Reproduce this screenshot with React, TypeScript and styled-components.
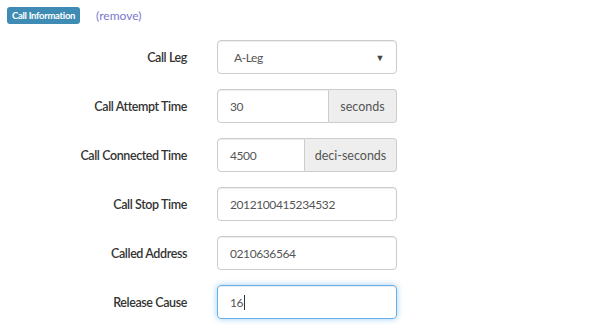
import React from "react";
import styled, { createGlobalStyle } from "styled-components";

const Global = createGlobalStyle`
  body { margin: 0; background: #fff; font-family: Lato, "Noto Sans", sans-serif; color: #333; }
`;

const Page = styled.div`
  padding: 6px 7px;
`;

const Header = styled.div`
  display: flex;
  align-items: center;
  gap: 16px;
  height: 18px;
`;

const Badge = styled.span`
  display: inline-flex;
  align-items: center;
  height: 17px;
  padding: 0 5px;
  background: #3e8cb4;
  color: #fff;
  border-radius: 3px;
  font-size: 9.5px;
  font-weight: 700;
  letter-spacing: -0.3px;
`;

const RemoveLink = styled.a`
  color: #7a78cf;
  font-size: 12px;
  text-decoration: none;
`;

const Form = styled.div`
  display: flex;
  flex-direction: column;
  gap: 15px;
  margin-top: 16px;
`;

const Row = styled.div`
  display: grid;
  grid-template-columns: 180px 180px;
  column-gap: 30px;
  align-items: center;
`;

const Label = styled.label`
  text-align: right;
  font-size: 12.5px;
  font-weight: 600;
  letter-spacing: -0.4px;
  color: #333;
`;

const Group = styled.div`
  display: flex;
  height: 34px;
`;

const Field = styled.div<{ $focus?: boolean; $addon?: boolean }>`
  flex: 1;
  display: flex;
  align-items: center;
  padding: 0 12px;
  border: 1px solid ${(p) => (p.$focus ? "#66afe9" : "#ccc")};
  border-radius: ${(p) => (p.$addon ? "4px 0 0 4px" : "4px")};
  box-shadow: ${(p) =>
    p.$focus ? "inset 0 1px 1px rgba(0,0,0,.075), 0 0 6px rgba(102,175,233,.6)" : "inset 0 1px 1px rgba(0,0,0,.075)"};
  font-size: 12px;
  letter-spacing: -0.4px;
  color: #555;
`;

const Caret = styled.span`
  display: inline-block;
  width: 1px;
  height: 15px;
  background: #333;
  margin-left: 1px;
`;

const Addon = styled.div<{ $w: number }>`
  width: ${(p) => p.$w}px;
  box-sizing: border-box;
  display: flex;
  align-items: center;
  justify-content: center;
  border: 1px solid #ccc;
  border-left: none;
  border-radius: 0 4px 4px 0;
  background: #eee;
  font-size: 12.5px;
  color: #555;
`;

const Select = styled(Field)`
  padding: 0 12px 0 16px;
  justify-content: space-between;
`;

const Arrow = styled.span`
  font-size: 9px;
  color: #444;
`;

export default function App() {
  return (
    <Page>
      <Global />
      <Header>
        <Badge>Call Information</Badge>
        <RemoveLink href="#">(remove)</RemoveLink>
      </Header>
      <Form>
        <Row>
          <Label>Call Leg</Label>
          <Group>
            <Select>
              <span>A-Leg</span>
              <Arrow>▼</Arrow>
            </Select>
          </Group>
        </Row>
        <Row>
          <Label>Call Attempt Time</Label>
          <Group>
            <Field $addon>30</Field>
            <Addon $w={68}>seconds</Addon>
          </Group>
        </Row>
        <Row>
          <Label>Call Connected Time</Label>
          <Group>
            <Field $addon>4500</Field>
            <Addon $w={92}>deci-seconds</Addon>
          </Group>
        </Row>
        <Row>
          <Label>Call Stop Time</Label>
          <Group>
            <Field>2012100415234532</Field>
          </Group>
        </Row>
        <Row>
          <Label>Called Address</Label>
          <Group>
            <Field>0210636564</Field>
          </Group>
        </Row>
        <Row>
          <Label>Release Cause</Label>
          <Group>
            <Field $focus>
              16<Caret />
            </Field>
          </Group>
        </Row>
      </Form>
    </Page>
  );
}
